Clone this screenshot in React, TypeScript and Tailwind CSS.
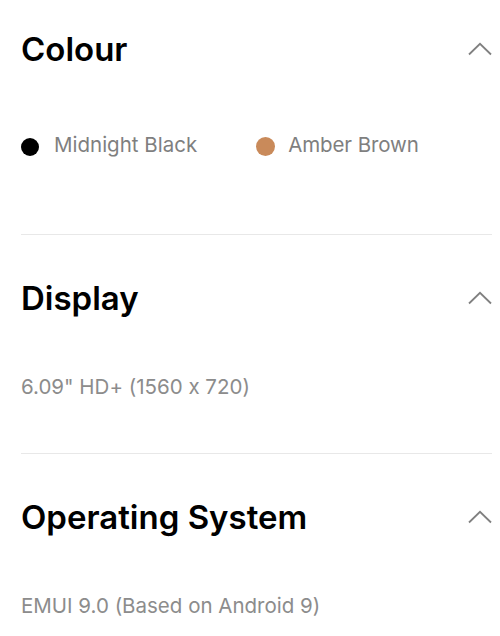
import { ReactNode } from "react";

const font = { fontFamily: "Inter, 'Noto Sans', sans-serif" };

function Chevron() {
  return (
    <svg width="24" height="14" viewBox="0 0 24 14" fill="none" className="text-[#808080]">
      <path d="M1 12.5L12 1.8L23 12.5" stroke="currentColor" strokeWidth="1.8" />
    </svg>
  );
}

interface SectionProps {
  title: string;
  first?: boolean;
  last?: boolean;
  children: ReactNode;
}

function Section({ title, first, last, children }: SectionProps) {
  return (
    <section className={`${first ? "pt-[29px]" : "pt-[43px]"} ${last ? "" : "border-b border-[#e8e8e8] pb-[52px]"}`}>
      <div className="flex items-center justify-between">
        <h2 className="text-[33px] leading-[40px] font-semibold text-black">{title}</h2>
        <Chevron />
      </div>
      {children}
    </section>
  );
}

export default function App() {
  return (
    <div
      className="w-[500px] h-[636px] overflow-hidden bg-white pl-[21px] pr-[8px] [font-feature-settings:'calt'_0]"
      style={font}
    >
      <Section title="Colour" first>
        <div className="mt-[62px] mb-[23px] flex items-center text-[20.5px] leading-[28px] text-[#7f7f7f]">
          <div className="flex items-center">
            <span className="w-[18px] h-[18px] rounded-full bg-black mt-[3px]" />
            <span className="ml-[15px]">Midnight Black</span>
          </div>
          <div className="flex items-center ml-[59px]">
            <span className="w-[19px] h-[19px] rounded-full bg-[#c98a5a] mt-[3px]" />
            <span className="ml-[13px] tracking-[-0.1px]">Amber Brown</span>
          </div>
        </div>
      </Section>
      <Section title="Display">
        <p className="mt-[55px] text-[20.5px] leading-[28px] text-[#8c8c8c]">6.09" HD+ (1560 x 720)</p>
      </Section>
      <Section title="Operating System" last>
        <p className="mt-[55px] text-[20.5px] leading-[28px] text-[#8c8c8c]">EMUI 9.0 (Based on Android 9)</p>
      </Section>
    </div>
  );
}
